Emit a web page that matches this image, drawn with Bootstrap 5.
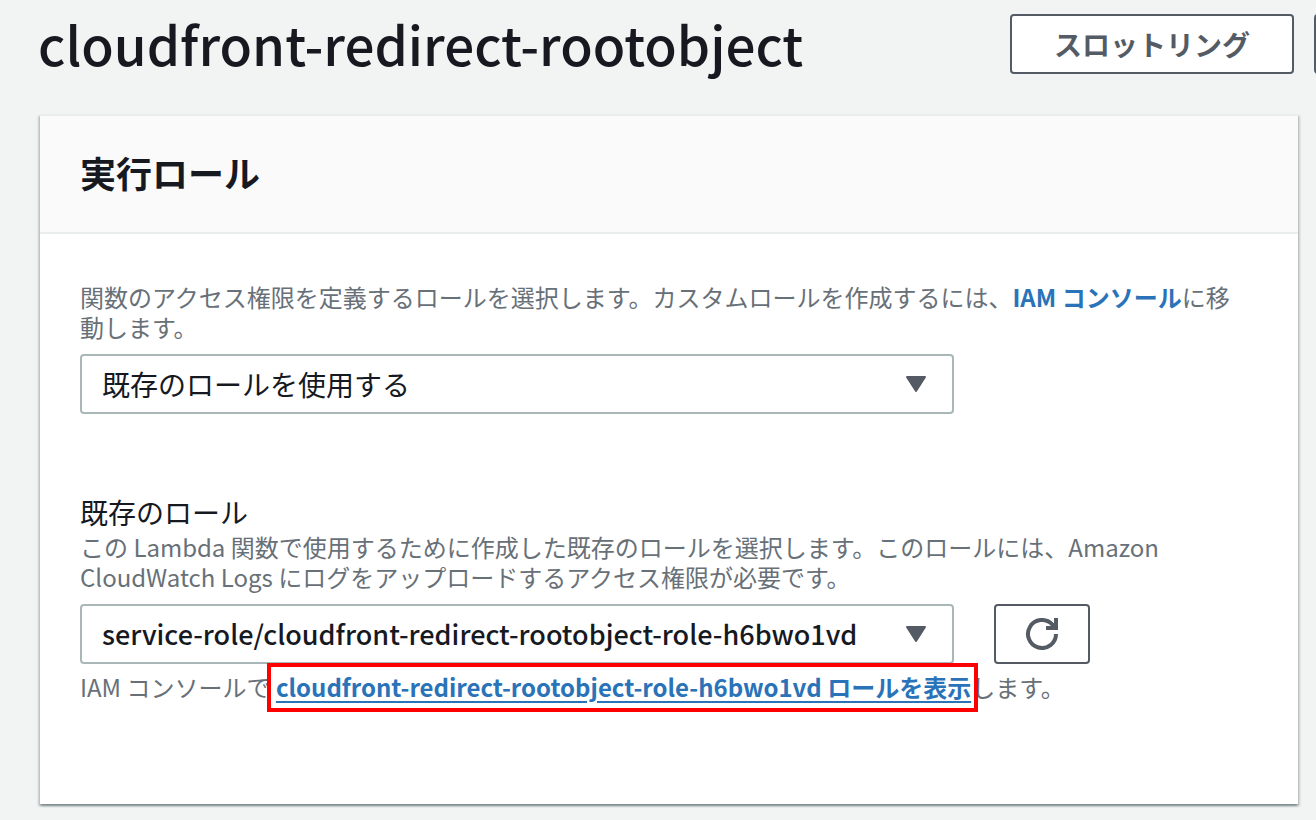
<!DOCTYPE html>
<html lang="ja">
<head>
<meta charset="utf-8">
<meta name="viewport" content="width=device-width, initial-scale=1">
<title>cloudfront-redirect-rootobject</title>
<link href="https://cdn.jsdelivr.net/npm/bootstrap@5.3.0/dist/css/bootstrap.min.css" rel="stylesheet">
<style>
  body {
    background: #f2f3f3;
    color: #16191f;
    font-family: "Noto Sans CJK JP", "Noto Sans", sans-serif;
    font-size: 28px;
    line-height: 36px;
  }
  .page-head { padding: 14px 0 20px 38px; gap: 20px; }
  .page-title { font-size: 53px; line-height: 58px; font-weight: 500; }
  .btn-console {
    height: 60px;
    padding: 0 42px;
    border: 2px solid #545b64;
    border-radius: 4px;
    background: #fff;
    color: #545b64;
    font-size: 28px;
    font-weight: 700;
    line-height: 52px;
  }
  .btn-console:hover { background: #fafafa; color: #16191f; border-color: #16191f; }
  /* the second action runs past the right edge of the window */
  .btn-next { width: 100px; margin-right: -98px; }
  .panel {
    margin: 20px 18px 16px 40px;
    border: 0;
    border-top: 2px solid #eaeded;
    border-radius: 0;
    background: #fff;
    color: inherit;
    box-shadow: 0 2px 2px rgba(0, 28, 36, .3), 2px 2px 2px rgba(0, 28, 36, .15), -2px 2px 2px rgba(0, 28, 36, .15);
  }
  .panel-head { height: 118px; padding: 0 40px 4px; background: #fafafa; border-bottom: 2px solid #eaeded; }
  .panel-head h2 { font-size: 36px; line-height: 44px; font-weight: 700; }
  .panel-content { padding: 48px 40px 102px; }
  .hint { color: #687078; font-size: 24px; line-height: 30px; padding-right: 12px; }
  .hint a { color: #2a73b8; font-weight: 700; text-decoration: none; }
  .fields { --bs-gutter-x: 40px; padding-top: 12px; }
  .select-console {
    height: 60px;
    padding: 0 60px 0 20px;
    border: 2px solid #aab7b8;
    border-radius: 4px;
    color: #16191f;
    font-size: 28px;
    line-height: 40px;
    background: #fff url("data:image/svg+xml,%3Csvg xmlns='http://www.w3.org/2000/svg' viewBox='0 0 20 16'%3E%3Cpath d='M1 1h18L10 15z' fill='%23545b64' stroke='%23545b64' stroke-width='2' stroke-linejoin='round'/%3E%3C/svg%3E") no-repeat right 26px center / 20px 16px;
  }
  .select-role { font-size: 27px; font-weight: 500; }
  .second-field { margin-top: 80px; }
  .field-label { margin-bottom: 2px; }
  .role-link { padding-top: 8px; }
  .hint a.marked { position: relative; text-decoration: underline; text-decoration-thickness: 2px; text-underline-offset: 4px; }
  .marked::after {
    content: "";
    position: absolute;
    inset: -6px -7px -8px -9px;
    border: 4px solid #f00;
    pointer-events: none;
  }
</style>
</head>
<body>
<header class="page-head d-flex align-items-start overflow-hidden">
  <h1 class="page-title mb-0 me-auto text-nowrap">cloudfront-redirect-rootobject</h1>
  <button type="button" class="btn btn-console flex-shrink-0">スロットリング</button>
  <button type="button" class="btn btn-console btn-next flex-shrink-0" aria-label="その他"></button>
</header>
<main class="card panel">
  <div class="panel-head d-flex align-items-center">
    <h2 class="mb-0">実行ロール</h2>
  </div>
  <div class="panel-content">
    <label for="roleType" class="hint d-block">関数のアクセス権限を定義するロールを選択します。カスタムロールを作成するには、<a href="#">IAM コンソール</a>に移動します。</label>
    <div class="row fields">
      <div class="col-9">
        <select id="roleType" class="form-select select-console"><option>既存のロールを使用する</option></select>
      </div>
    </div>
    <div class="second-field">
      <label for="existingRole" class="field-label d-block">既存のロール</label>
      <p class="hint mb-0">この Lambda 関数で使用するために作成した既存のロールを選択します。このロールには、Amazon CloudWatch Logs にログをアップロードするアクセス権限が必要です。</p>
      <div class="row fields">
        <div class="col-9">
          <select id="existingRole" class="form-select select-console select-role"><option>service-role/cloudfront-redirect-rootobject-role-h6bwo1vd</option></select>
        </div>
        <div class="col-auto">
          <button type="button" class="btn btn-console px-4" aria-label="更新">
            <svg class="d-block mx-auto" width="44" height="32" viewBox="-6 0 44 32" aria-hidden="true"><path d="M30 16A14 14 0 1 1 26 6.200L29 9" fill="none" stroke="#545b64" stroke-width="4"/><path d="M28 0h4v12H20V8h5l3-3z" fill="#545b64"/></svg>
          </button>
        </div>
      </div>
      <p class="hint role-link mb-0">IAM コンソールで <a href="#" class="marked">cloudfront-redirect-rootobject-role-h6bwo1vd ロールを表示</a>します。</p>
    </div>
  </div>
</main>
<script src="https://cdn.jsdelivr.net/npm/bootstrap@5.3.0/dist/js/bootstrap.bundle.min.js"></script>
</body>
</html>
